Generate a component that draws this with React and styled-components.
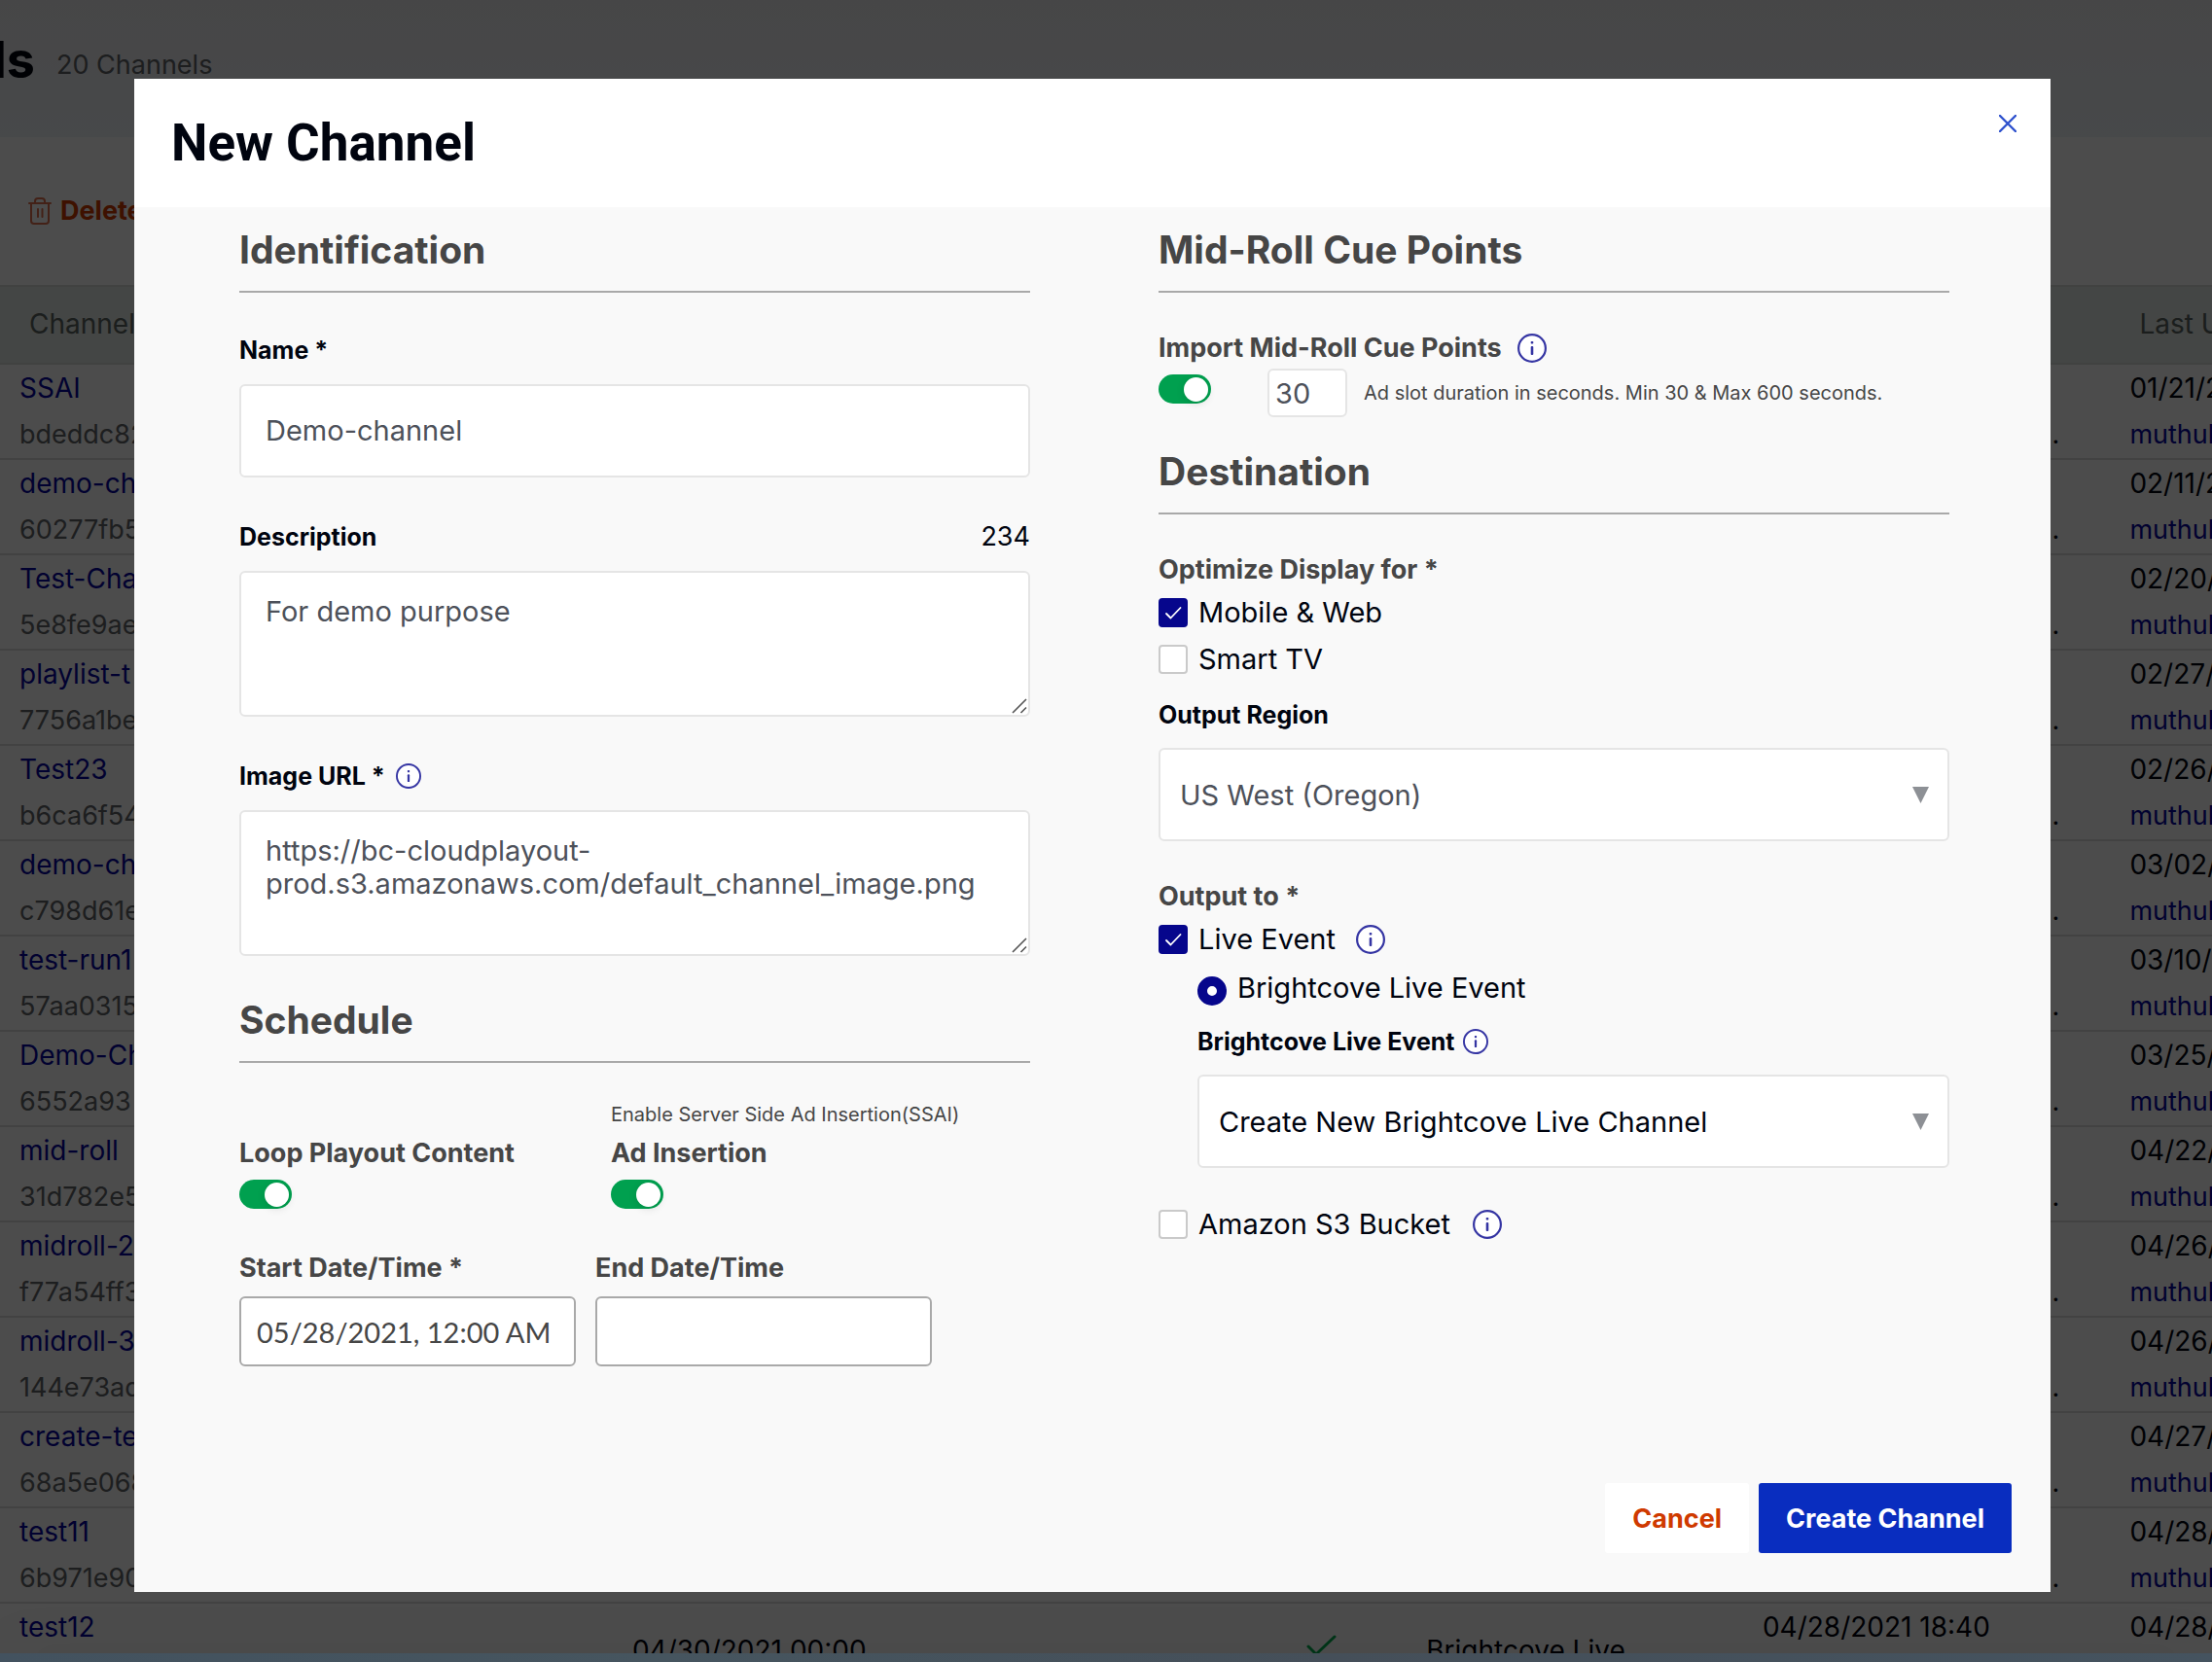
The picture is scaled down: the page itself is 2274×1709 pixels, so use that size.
import React from "react";
import styled, { createGlobalStyle, css } from "styled-components";

const c = {
  ink: "#00040f",
  grey: "#464646",
  field: "#4d515a",
  border: "#e5e5e5",
  rule: "#a9a9a9",
  navy: "#06068c",
  info: "#3535a3",
  green: "#00a04f",
  link: "#0606a0",
  danger: "#cf3a00",
  primary: "#092dbf",
};

const GlobalStyle = createGlobalStyle`
  *, *::before, *::after { box-sizing: border-box; }
  body { margin: 0; overflow: hidden; }
  body, input, textarea, select, button { font-family: Inter, "Liberation Sans", sans-serif; }
`;

/* ---------- channel list behind the dialog ---------- */

const Page = styled.div`
  display: flex;
  flex-direction: column;
  height: 100vh;
  overflow: hidden;
  background: #fff;
  color: ${c.ink};
`;

const PageHeader = styled.header`
  display: flex;
  align-items: flex-start;
  gap: 22px;
  flex: none;
  padding: 30px 0 37px;
  background: linear-gradient(#ececee, #eff3f8);
`;

const PageTitle = styled.h1`
  display: flex;
  justify-content: flex-end;
  width: 36px;
  margin: 0;
  font-size: 52px;
  line-height: 64px;
  font-weight: 700;
`;

const Count = styled.span`
  font-size: 27px;
  line-height: 74px;
  color: #616468;
`;

const Toolbar = styled.div`
  display: flex;
  align-items: center;
  flex: none;
  height: 152px;
  padding-left: 29px;
`;

const DeleteButton = styled.button`
  display: flex;
  align-items: center;
  gap: 9px;
  padding: 0;
  border: 0;
  background: none;
  font-size: 27px;
  line-height: 38px;
  font-weight: 700;
  color: ${c.danger};
`;

const TableArea = styled.div`
  flex: 1;
  min-height: 0;
  overflow: hidden;
`;

const Table = styled.table`
  width: 100%;
  table-layout: fixed;
  border-collapse: separate;
  border-spacing: 0;
  font-size: 28px;
  line-height: 48px;
`;

const HeadCell = styled.th`
  height: 82px;
  padding: 0 0 2px 30px;
  border: 2px solid #d9dedb;
  border-width: 2px 0;
  background: #e3eae6;
  font-weight: 400;
  text-align: left;
  white-space: nowrap;
  overflow: hidden;
  color: #5c6562;
`;

const Cell = styled.td`
  height: 98px;
  padding: 0 0 0 20px;
  border-bottom: 2px solid #dedede;
  white-space: nowrap;
  overflow: hidden;
`;

const Line = styled.div`
  min-height: 48px;
  padding-right: ${(p) => (p.$end ? "52px" : "0")};
  text-align: ${(p) => (p.$end ? "right" : "left")};
  font-size: ${(p) => (p.$sub ? "27px" : "28px")};
  color: ${(p) => (p.$muted ? "#616468" : "inherit")};
`;

const CellLink = styled.a`
  color: ${c.link};
  text-decoration: none;
`;

const Dock = styled.div`
  position: fixed;
  inset: auto 0 0 0;
  z-index: 3;
  height: 9px;
  background: linear-gradient(90deg, #43525f, #46555f 30%, #454f59 60%, #45535f);
  box-shadow: 0 0 60px rgba(0, 0, 0, 0.14);
`;

/* ---------- dialog ---------- */

const Overlay = styled.div`
  position: fixed;
  inset: 0;
  z-index: 2;
  display: flex;
  padding: 81px 166px 72px 138px;
  background: rgba(0, 0, 0, 0.7);
`;

const Modal = styled.section`
  display: flex;
  flex-direction: column;
  flex: 1;
  min-width: 0;
  background: #f9f9f9;
`;

const ModalHeader = styled.header`
  display: flex;
  justify-content: space-between;
  align-items: flex-start;
  padding: 29px 27px 29px 38px;
  background: #fff;
`;

const ModalTitle = styled.h2`
  margin: 0;
  font-family: Roboto, "Liberation Sans", sans-serif;
  font-size: 53px;
  line-height: 74px;
  font-weight: 700;
  color: ${c.ink};
`;

const CloseButton = styled.button`
  display: flex;
  padding: 8px;
  border: 0;
  background: none;
  color: #2d50cd;
`;

const Form = styled.form`
  display: flex;
  flex-direction: column;
  flex: 1;
`;

const Columns = styled.div`
  display: grid;
  grid-template-columns: 1fr 1fr;
  gap: 132px;
  flex: 1;
  padding: 20px 104px 0 108px;
`;

const Column = styled.div`
  display: flex;
  flex-direction: column;
  gap: ${(p) => p.$gap};
  min-width: 0;
`;

const Heading = styled.h3`
  margin: 0;
  padding-bottom: 18px;
  border-bottom: 2px solid ${c.rule};
  font-size: 39px;
  line-height: 48px;
  font-weight: 700;
  color: ${c.grey};
`;

const Group = styled.div`
  display: flex;
  flex-direction: column;
  gap: 42px;
  padding-top: 40px;
`;

const Stack = styled.div`
  display: flex;
  flex-direction: column;
  padding-top: 38px;
`;

const Field = styled.div`
  display: flex;
  flex-direction: column;
  gap: ${(p) => p.$gap || "16px"};
  margin-top: ${(p) => p.$top || "0"};
`;

const Indent = styled.div`
  padding-left: 40px;
`;

const Row = styled.div`
  display: flex;
  align-items: center;
  gap: ${(p) => p.$gap || "0"};
  margin-top: ${(p) => p.$top || "0"};
`;

const Spread = styled.div`
  display: flex;
  justify-content: space-between;
`;

const labelStyle = css`
  font-size: ${(p) => (p.$muted ? "27px" : "25px")};
  line-height: 38px;
  font-weight: 700;
  color: ${(p) => (p.$muted ? c.grey : c.ink)};
`;

const Label = styled.label`
  ${labelStyle}
`;

const Caption = styled.span`
  ${labelStyle}
`;

const Counter = styled.span`
  font-size: 27px;
  line-height: 38px;
  color: ${c.ink};
`;

const Hint = styled.span`
  font-size: 20px;
  line-height: 26px;
  color: ${c.grey};
`;

const boxStyle = css`
  width: 100%;
  border: 2px solid ${c.border};
  border-radius: 6px;
  background: #fff;
  font-size: 29px;
  color: ${c.field};
  outline: none;
`;

const TextInput = styled.input`
  ${boxStyle}
  height: 96px;
  padding: 0 25px 2px;
`;

const TextAreaBox = styled.div`
  display: grid;
  > * { grid-area: 1 / 1; }
  > svg { place-self: end; margin: 0 3px 3px 0; pointer-events: none; }
`;

const TextArea = styled.textarea`
  ${boxStyle}
  display: block;
  height: 150px;
  padding: 23px 25px;
  line-height: 34px;
  &::-webkit-resizer { background: transparent; }
`;

const NumberInput = styled.input`
  ${boxStyle}
  width: 82px;
  height: 50px;
  padding: 0 6px;
`;

const DateInput = styled.input`
  ${boxStyle}
  height: 72px;
  padding: 0 16px;
  border-color: ${c.rule};
  font-family: Lato, "Liberation Sans", sans-serif;
  color: ${c.grey};
`;

const SelectBox = styled.div`
  display: grid;
  align-items: center;
  > * { grid-area: 1 / 1; }
  > svg { justify-self: end; margin-right: 21px; pointer-events: none; }
`;

const Select = styled.select`
  ${boxStyle}
  appearance: none;
  height: 96px;
  padding: 0 60px 0 20px;
  color: ${(p) => (p.$dark ? c.ink : c.field)};
`;

const Toggle = styled.input`
  appearance: none;
  display: flex;
  justify-content: flex-end;
  align-items: center;
  flex: none;
  width: 54px;
  height: 30px;
  margin: 0;
  padding: 0 3px;
  border-radius: 15px;
  background: ${c.green};
  &::before {
    content: "";
    width: 25px;
    height: 25px;
    border-radius: 50%;
    background: #fff;
    box-shadow: 0 2px 8px rgba(0, 0, 0, 0.12);
  }
`;

const ToggleGrid = styled.div`
  display: grid;
  grid-template-columns: 382px 1fr;
  align-items: end;
`;

const ToggleField = styled.div`
  display: flex;
  flex-direction: column;
  gap: 8px;
`;

const DateGrid = styled.div`
  display: grid;
  grid-template-columns: 346px 346px;
  gap: 20px;
`;

const DateField = styled.div`
  display: flex;
  flex-direction: column;
  gap: 10px;
`;

const SlotRow = styled.div`
  display: flex;
  align-items: center;
  gap: 17px;
  margin-top: 2px;
  > :first-child { align-self: flex-start; margin: 6px 41px 0 0; }
`;

const TickBox = styled.span`
  display: grid;
  place-items: center;
  > * { grid-area: 1 / 1; pointer-events: none; }
  > input { pointer-events: auto; }
`;

const TickInput = styled.input`
  appearance: none;
  width: 30px;
  height: 30px;
  margin: 0;
  border: 2px solid #cacaca;
  border-radius: 4px;
  background: #fff;
  &:checked { border-color: ${c.navy}; background: ${c.navy}; }
`;

const RadioInput = styled.input`
  appearance: none;
  width: 30px;
  height: 30px;
  margin: 6px 0 0;
  border: 10px solid ${c.navy};
  border-radius: 50%;
  background: #fff;
`;

const Choice = styled.label`
  display: flex;
  align-items: center;
  gap: 11px;
  font-size: 29px;
  line-height: 38px;
  color: ${c.ink};
`;

const Footer = styled.footer`
  display: flex;
  justify-content: flex-end;
  gap: 10px;
  padding: 40px;
`;

const Button = styled.button`
  height: 72px;
  padding: 0 28px;
  border: 0;
  border-radius: 3px;
  background: ${(p) => (p.$primary ? c.primary : "#fff")};
  font-size: 27px;
  font-weight: 700;
  color: ${(p) => (p.$primary ? "#fff" : c.danger)};
`;

/* ---------- icons ---------- */

const Info = ({ size = 30 }) => (
  <svg width={size} height={size} viewBox="0 0 30 30" role="img" aria-label="Info">
    <circle cx="15" cy="15" r="13.9" fill="#fff" stroke={c.info} strokeWidth="2.2" />
    <rect x="13.7" y="8" width="2.6" height="2.6" rx="0.8" fill={c.info} />
    <rect x="13.7" y="13" width="2.6" height="9" rx="1" fill={c.info} />
  </svg>
);

const Arrow = () => (
  <svg width="17" height="17" viewBox="0 0 17 17" aria-hidden="true">
    <path d="M0 0h17L8.500 17z" fill="#8d9095" />
  </svg>
);

const Grip = () => (
  <svg width="16" height="16" viewBox="0 0 16 16" aria-hidden="true">
    <path d="M0 0h16v16H0z" fill="#fff" />
    <path d="M1 15L15 1M9.500 15L15 9.500" stroke="#555" strokeWidth="1.600" />
  </svg>
);

const Tick = () => (
  <svg width="30" height="30" viewBox="0 0 30 30" fill="none" aria-hidden="true">
    <path d="M8 16l4.500 4.500L22.500 10" stroke="#fff" strokeWidth="1.800" strokeLinecap="round" strokeLinejoin="round" />
  </svg>
);

const Cross = () => (
  <svg width="18" height="18" viewBox="0 0 18 18" aria-hidden="true">
    <path d="M1 1l16 16M17 1L1 17" stroke="currentColor" strokeWidth="2.400" strokeLinecap="round" />
  </svg>
);

const Trash = () => (
  <svg width="24" height="28" viewBox="0 0 24 28" fill="none" stroke="#e0714d" strokeWidth="2" strokeLinecap="round" aria-hidden="true">
    <path d="M1 6h22M7 6V4a3 3 0 0 1 3-3h4a3 3 0 0 1 3 3v2M3 6v18a3 3 0 0 0 3 3h12a3 3 0 0 0 3-3V6M10 12v8M14.500 12v8" />
  </svg>
);

const CheckMark = styled.svg`
  display: block;
`;

const GreenCheck = () => (
  <CheckMark width="32" height="32" viewBox="0 0 32 32" fill="none" aria-hidden="true">
    <path d="M2 12l8 8L29 2" stroke="#04b052" strokeWidth="3" strokeLinecap="round" strokeLinejoin="round" />
  </CheckMark>
);

const CheckBox = ({ checked }) => (
  <TickBox>
    <TickInput type="checkbox" defaultChecked={checked} />
    {checked && <Tick />}
  </TickBox>
);

/* ---------- data ---------- */

const channels = [
  ["SSAI", "bdeddc82", "01/21/2021"],
  ["demo-ch", "60277fb5", "02/11/2021"],
  ["Test-Cha", "5e8fe9ae", "02/20/2021"],
  ["playlist-t", "7756a1be", "02/27/2021"],
  ["Test23", "b6ca6f54", "02/26/2021"],
  ["demo-ch", "c798d61e", "03/02/2021"],
  ["test-run1", "57aa0315", "03/10/2021"],
  ["Demo-Ch", "6552a93", "03/25/2021"],
  ["mid-roll", "31d782e5", "04/22/2021"],
  ["midroll-2", "f77a54ff3", "04/26/2021"],
  ["midroll-3", "144e73ad", "04/26/2021"],
  ["create-te", "68a5e068", "04/27/2021"],
  ["test11", "6b971e90", "04/28/2021"],
  ["test12", "", "04/28/2021", { start: "04/30/2021 00:00", output: "Brightcove Live", created: "04/28/2021 18:40" }],
];

const widths = ["27.7%", "30.5%", "5.4%", "15.2%", "16.6%", "4.6%"];

const Col = styled.col`
  width: ${(p) => p.$width};
`;

function ChannelList() {
  return (
    <Page>
      <PageHeader>
        <PageTitle>ls</PageTitle>
        <Count>20 Channels</Count>
      </PageHeader>
      <Toolbar>
        <DeleteButton type="button">
          <Trash />
          Delete
        </DeleteButton>
      </Toolbar>
      <TableArea>
        <Table>
          <colgroup>
            {widths.map((w, i) => (
              <Col key={i} $width={w} />
            ))}
          </colgroup>
          <thead>
            <tr>
              <HeadCell>Channel</HeadCell>
              <HeadCell />
              <HeadCell />
              <HeadCell />
              <HeadCell />
              <HeadCell>Last U</HeadCell>
            </tr>
          </thead>
          <tbody>
            {channels.map(([name, id, updated, more]) => (
              <tr key={name + id}>
                <Cell>
                  <Line>
                    <CellLink href="#channel">{name}</CellLink>
                  </Line>
                  <Line $sub $muted>{id}</Line>
                </Cell>
                <Cell>{more && more.start}</Cell>
                <Cell>{more && <GreenCheck />}</Cell>
                <Cell>{more && more.output}</Cell>
                <Cell>
                  <Line>{more && more.created}</Line>
                  <Line $sub $end>{!more && "."}</Line>
                </Cell>
                <Cell>
                  <Line>{updated}</Line>
                  <Line $sub>{!more && <CellLink href="#user">muthuk</CellLink>}</Line>
                </Cell>
              </tr>
            ))}
          </tbody>
        </Table>
      </TableArea>
    </Page>
  );
}

function Identification() {
  return (
    <section>
      <Heading>Identification</Heading>
      <Group>
        <Field>
          <Label htmlFor="name">Name *</Label>
          <TextInput id="name" defaultValue="Demo-channel" />
        </Field>
        <Field>
          <Spread>
            <Label htmlFor="description">Description</Label>
            <Counter>234</Counter>
          </Spread>
          <TextAreaBox>
            <TextArea id="description" defaultValue="For demo purpose" />
            <Grip />
          </TextAreaBox>
        </Field>
        <Field>
          <Row $gap="11px">
            <Label htmlFor="image">Image URL *</Label>
            <Info size={26} />
          </Row>
          <TextAreaBox>
            <TextArea
              id="image"
              spellCheck={false}
              defaultValue="https://bc-cloudplayout-prod.s3.amazonaws.com/default_channel_image.png"
            />
            <Grip />
          </TextAreaBox>
        </Field>
      </Group>
    </section>
  );
}

function Schedule() {
  return (
    <section>
      <Heading>Schedule</Heading>
      <Group>
        <ToggleGrid>
          <ToggleField>
            <Label $muted htmlFor="loop">Loop Playout Content</Label>
            <Toggle type="checkbox" id="loop" defaultChecked />
          </ToggleField>
          <ToggleField>
            <Hint>Enable Server Side Ad Insertion(SSAI)</Hint>
            <Label $muted htmlFor="ads">Ad Insertion</Label>
            <Toggle type="checkbox" id="ads" defaultChecked />
          </ToggleField>
        </ToggleGrid>
        <DateGrid>
          <DateField>
            <Label $muted htmlFor="start">Start Date/Time *</Label>
            <DateInput id="start" defaultValue="05/28/2021, 12:00 AM" />
          </DateField>
          <DateField>
            <Label $muted htmlFor="end">End Date/Time</Label>
            <DateInput id="end" />
          </DateField>
        </DateGrid>
      </Group>
    </section>
  );
}

function CuePoints() {
  return (
    <section>
      <Heading>Mid-Roll Cue Points</Heading>
      <Stack>
        <Row $gap="16px">
          <Label $muted htmlFor="cues">Import Mid-Roll Cue Points</Label>
          <Info />
        </Row>
        <SlotRow>
          <Toggle type="checkbox" id="cues" defaultChecked />
          <NumberInput
            inputMode="numeric"
            aria-label="Ad slot duration in seconds"
            defaultValue="30"
          />
          <Hint>Ad slot duration in seconds. Min 30 & Max 600 seconds.</Hint>
        </SlotRow>
      </Stack>
    </section>
  );
}

function Destination() {
  return (
    <section>
      <Heading>Destination</Heading>
      <Stack>
        <Caption $muted>Optimize Display for *</Caption>
        <Row $top="6px">
          <Choice>
            <CheckBox checked />
            Mobile & Web
          </Choice>
        </Row>
        <Row $top="10px">
          <Choice>
            <CheckBox />
            Smart TV
          </Choice>
        </Row>
        <Field $top="19px" $gap="15px">
          <Label htmlFor="region">Output Region</Label>
          <SelectBox>
            <Select id="region">
              <option>US West (Oregon)</option>
            </Select>
            <Arrow />
          </SelectBox>
        </Field>
        <Row $top="38px">
          <Caption $muted>Output to *</Caption>
        </Row>
        <Row $top="6px" $gap="21px">
          <Choice>
            <CheckBox checked />
            Live Event
          </Choice>
          <Info />
        </Row>
        <Indent>
          <Row $top="12px">
            <Choice>
              <RadioInput type="radio" name="output" defaultChecked />
              Brightcove Live Event
            </Choice>
          </Row>
          <Field $top="17px" $gap="15px">
            <Row $gap="8px">
              <Label htmlFor="event">Brightcove Live Event</Label>
              <Info size={26} />
            </Row>
            <SelectBox>
              <Select id="event" $dark>
                <option>Create New Brightcove Live Channel</option>
              </Select>
              <Arrow />
            </SelectBox>
          </Field>
        </Indent>
        <Row $top="39px" $gap="23px">
          <Choice>
            <CheckBox />
            Amazon S3 Bucket
          </Choice>
          <Info />
        </Row>
      </Stack>
    </section>
  );
}

export default function App() {
  return (
    <>
      <GlobalStyle />
      <ChannelList />
      <Overlay>
        <Modal role="dialog" aria-labelledby="dialog-title">
          <ModalHeader>
            <ModalTitle id="dialog-title">New Channel</ModalTitle>
            <CloseButton type="button" aria-label="Close">
              <Cross />
            </CloseButton>
          </ModalHeader>
          <Form onSubmit={(e) => e.preventDefault()}>
            <Columns>
              <Column $gap="42px">
                <Identification />
                <Schedule />
              </Column>
              <Column $gap="32px">
                <CuePoints />
                <Destination />
              </Column>
            </Columns>
            <Footer>
              <Button type="button">Cancel</Button>
              <Button type="submit" $primary>Create Channel</Button>
            </Footer>
          </Form>
        </Modal>
      </Overlay>
      <Dock />
    </>
  );
}
